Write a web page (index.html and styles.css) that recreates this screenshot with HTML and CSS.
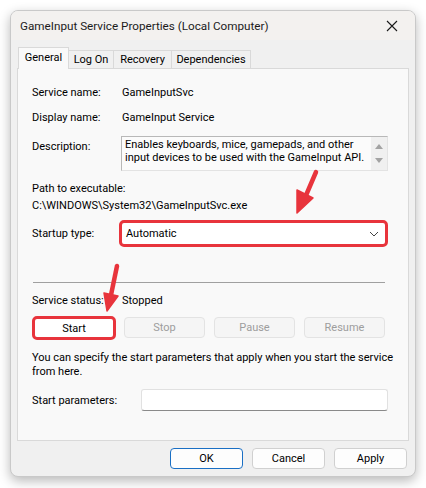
FILE: index.html
```html
<!DOCTYPE html>
<html>
<head>
<meta charset="utf-8">
<link rel="stylesheet" href="styles.css">
</head>
<body>
<div class="window">
  <div class="titlebar">
    <span class="title">GameInput Service Properties (Local Computer)</span>
    <svg class="close" width="12" height="12" viewBox="0 0 12 12"><path d="M1 1L11 11M11 1L1 11" stroke="#1a1a1a" stroke-width="1.1" fill="none"/></svg>
  </div>
  <div class="content">
    <div class="tabs">
      <div class="tab active">General</div>
      <div class="tab">Log On</div>
      <div class="tab">Recovery</div>
      <div class="tab">Dependencies</div>
    </div>
    <div class="panel">
      <div class="row r1"><span class="lbl">Service name:</span><span class="val">GameInputSvc</span></div>
      <div class="row r2"><span class="lbl">Display name:</span><span class="val">GameInput Service</span></div>
      <div class="row r3">
        <span class="lbl desc-lbl">Description:</span>
        <div class="descbox">
          <div class="desctext">Enables keyboards, mice, gamepads, and other<br>input devices to be used with the GameInput API.</div>
          <div class="scroll">
            <svg width="10" height="7" viewBox="0 0 10 7"><path d="M1 6L5 1L9 6Z" fill="#a3a3a3"/></svg>
            <svg width="10" height="7" viewBox="0 0 10 7"><path d="M1 1L5 6L9 1Z" fill="#a3a3a3"/></svg>
          </div>
        </div>
      </div>
      <div class="line r4">Path to executable:</div>
      <div class="line r5">C:\WINDOWS\System32\GameInputSvc.exe</div>
      <div class="row r6">
        <span class="lbl">Startup type:</span>
        <div class="select">
          <span>Automatic</span>
          <svg width="10" height="6" viewBox="0 0 10 6"><path d="M1 1L5 5L9 1" stroke="#444" stroke-width="1" fill="none"/></svg>
        </div>
      </div>
      <div class="sep"></div>
      <div class="row r7"><span class="lbl">Service status:</span><span class="val">Stopped</span></div>
      <div class="btnrow">
        <div class="btn start">Start</div>
        <div class="btn dis">Stop</div>
        <div class="btn dis">Pause</div>
        <div class="btn dis">Resume</div>
      </div>
      <div class="note">You can specify the start parameters that apply when you start the service<br>from here.</div>
      <div class="row r8">
        <span class="lbl lbl2">Start parameters:</span>
        <div class="input"></div>
      </div>
    </div>
    <div class="footer">
      <div class="btn fbtn ok">OK</div>
      <div class="btn fbtn">Cancel</div>
      <div class="btn fbtn">Apply</div>
    </div>
  </div>
  <svg class="arrow a1" width="40" height="60" viewBox="0 0 40 60">
    <path d="M26 2L14 30" stroke="#e8343c" stroke-width="4.5" stroke-linecap="round" fill="none"/>
    <path d="M7 20L23 28L7 43Z" fill="#e8343c" stroke="#e8343c" stroke-width="1.5" stroke-linejoin="round"/>
  </svg>
  <svg class="arrow a2" width="30" height="60" viewBox="0 0 30 60">
    <path d="M14 3L8 32" stroke="#e8343c" stroke-width="4.5" stroke-linecap="round" fill="none"/>
    <path d="M1 30L15 33L4 48Z" fill="#e8343c" stroke="#e8343c" stroke-width="1.5" stroke-linejoin="round"/>
  </svg>
</div>
</body>
</html>
```
FILE: styles.css
```css
html, body {
  margin: 0;
  padding: 0;
  background: #ffffff;
}
body {
  width: 426px;
  height: 488px;
  overflow: hidden;
  font-family: Roboto, "Liberation Sans", sans-serif;
  font-size: 11px;
  color: #000;
  white-space: nowrap;
}
.window {
  position: relative;
  margin: 10px 0 0 10px;
  width: 406px;
  height: 467px;
  box-sizing: border-box;
  border: 1px solid #c9c9c9;
  border-radius: 8px;
  background: #f0f0f0;
  box-shadow: 0 4px 12px rgba(0,0,0,0.28);
  overflow: hidden;
}
.titlebar {
  height: 29px;
  background: #f3f1ef;
  display: flex;
  align-items: center;
  justify-content: space-between;
  padding: 0 17px 0 9px;
}
.title {
  font-size: 11.7px;
  color: #1b1b1b;
}
.content {
  padding: 7px 6px 0 6px;
}
.tabs {
  display: flex;
  align-items: flex-end;
  height: 21px;
  padding-left: 1px;
  position: relative;
  z-index: 2;
}
.tab {
  height: 18px;
  line-height: 18px;
  border: 1px solid #d9d9d9;
  border-bottom: none;
  border-left: none;
  background: #f0f0f0;
  box-sizing: border-box;
  display: flex;
  justify-content: center;
}
.tab.active {
  background: #f9f9f9;
  border-left: 1px solid #d9d9d9;
  line-height: 19px;
  margin-bottom: -1px;
  height: 22px;
  width: 51px;
}
.tab:nth-child(2) { width: 45px; }
.tab:nth-child(3) { width: 58px; }
.tab:nth-child(4) { width: 79px; }
.panel {
  height: 373px;
  box-sizing: border-box;
  border: 1px solid #d9d9d9;
  background: #f9f9f9;
  padding: 15px 20px 0 14px;
}
.row {
  display: flex;
  align-items: center;
}
.lbl {
  width: 90px;
  flex: none;
}
.r1 { height: 16px; }
.r2 { height: 16px; margin-top: 9px; }
.r3 {
  margin-top: 11px;
  align-items: flex-start;
}
.desc-lbl { margin-top: 4px; }
.descbox {
  width: 267px;
  height: 35px;
  box-sizing: border-box;
  border: 1px solid #b8b8b8;
  border-right-color: #e3e3e3;
  border-bottom-color: #e3e3e3;
  background: #fbfbfb;
  display: flex;
  margin-left: -1px;
}
.desctext {
  flex: 1;
  padding: 1px 2px 0 3px;
  line-height: 13px;
}
.scroll {
  width: 16px;
  background: #f0f0f0;
  display: flex;
  flex-direction: column;
  align-items: center;
  justify-content: space-between;
  padding: 6px 0 6px;
}
.line {
  height: 16px;
  line-height: 16px;
}
.r4 { margin-top: 10px; }
.r5 { margin-top: 1px; }
.r6 { margin-top: 6px; }
.select {
  width: 271px;
  height: 27px;
  box-sizing: border-box;
  border: 3px solid #e8343c;
  border-radius: 5px;
  background: #fff;
  margin-left: -3px;
  display: flex;
  align-items: center;
  justify-content: space-between;
  padding: 0 6px 0 4px;
}
.sep {
  height: 1px;
  background: #a0a0a0;
  margin: 35px 3px 0 1px;
}
.r7 { height: 16px; margin-top: 9px; }
.btnrow {
  display: flex;
  gap: 9px;
  margin-top: 9px;
}
.btn {
  height: 21px;
  box-sizing: border-box;
  border: 1px solid #d0d0d0;
  border-radius: 4px;
  background: #fdfdfd;
  display: flex;
  align-items: center;
  justify-content: center;
  width: 81px;
}
.btn.start {
  width: 84px;
  height: 24px;
  border: 3px solid #e8343c;
  border-radius: 5px;
  background: #fff;
  margin-top: -1px;
  margin-right: -1px;
}
.btn.dis {
  color: #9d9d9d;
  background: #f5f5f5;
  border-color: #e3e3e3;
}
.note {
  margin-top: 11px;
  line-height: 13.5px;
}
.r8 { margin-top: 11px; }
.lbl2 { width: 109px; }
.input {
  width: 248px;
  height: 22px;
  box-sizing: border-box;
  border: 1px solid #e1e1e1;
  border-bottom: 1px solid #8a8a8a;
  border-radius: 3px;
  background: #fff;
}
.footer {
  display: flex;
  justify-content: flex-end;
  gap: 9px;
  margin-top: 7px;
  padding-right: 2px;
}
.fbtn {
  width: 73px;
  height: 21px;
  border-color: #d0d0d0;
}
.fbtn.ok {
  border-color: #1a6fc4;
}
.arrow {
  position: absolute;
  overflow: visible;
}
.a1 { left: 279px; top: 159px; }
.a2 { left: 92px; top: 252px; }
.close { flex: none; }
```
